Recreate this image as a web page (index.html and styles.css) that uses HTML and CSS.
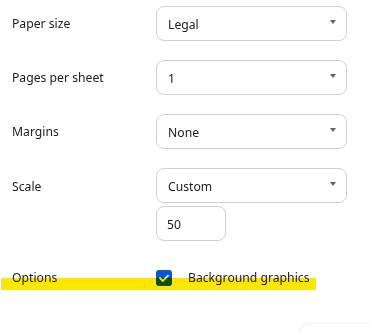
FILE: index.html
```html
<!DOCTYPE html>
<html>
<head>
<meta charset="utf-8">
<link rel="stylesheet" href="styles.css">
</head>
<body>
<div class="settings">
  <div class="row">
    <div class="label">Paper size</div>
    <div class="select"><span>Legal</span><span class="arrow"></span></div>
  </div>
  <div class="row">
    <div class="label">Pages per sheet</div>
    <div class="select"><span>1</span><span class="arrow"></span></div>
  </div>
  <div class="row">
    <div class="label">Margins</div>
    <div class="select"><span>None</span><span class="arrow"></span></div>
  </div>
  <div class="row scale-row">
    <div class="label">Scale</div>
    <div class="controls">
      <div class="select"><span>Custom</span><span class="arrow"></span></div>
      <div class="number">50</div>
    </div>
  </div>
  <div class="row options-row">
    <div class="label">Options</div>
    <div class="check-wrap">
      <span class="checkbox"><svg width="16" height="16" viewBox="0 0 16 16"><path d="M4 8.2 L6.8 11 L12 5.6" fill="none" stroke="#fff" stroke-width="1.8" stroke-linecap="round" stroke-linejoin="round"/></svg></span>
      <span class="check-label">Background graphics</span>
    </div>
    <div class="highlight"></div>
  </div>
</div>
<div class="floating-card"></div>
</body>
</html>
```
FILE: styles.css
```css
html, body {
  margin: 0;
  padding: 0;
  background: #fff;
  width: 370px;
  height: 334px;
  overflow: hidden;
}
body {
  font-family: "Noto Sans", "Open Sans", sans-serif;
  font-size: 12.2px;
  color: #202124;
  position: relative;
}
.settings {
  padding-top: 6px;
  display: flex;
  flex-direction: column;
  gap: 19px;
}
.row {
  display: grid;
  grid-template-columns: 156px 191px;
  align-items: center;
}
.label {
  padding-left: 12px;
  line-height: 16px;
}
.select {
  box-sizing: border-box;
  height: 35px;
  border: 1px solid #d0d0d0;
  border-radius: 8px;
  display: flex;
  align-items: center;
  justify-content: space-between;
  padding: 3px 10px 0 11px;
  line-height: 16px;
}
.arrow {
  width: 0;
  height: 0;
  border-left: 3.5px solid transparent;
  border-right: 3.5px solid transparent;
  border-top: 4px solid #5f6368;
  margin-top: -6px;
}
.scale-row {
  align-items: start;
}
.scale-row .label {
  margin-top: 11px;
}
.controls {
  display: flex;
  flex-direction: column;
  gap: 3px;
}
.number {
  box-sizing: border-box;
  width: 70px;
  height: 35px;
  border: 1px solid #d0d0d0;
  border-radius: 8px;
  padding: 2px 0 0 10px;
  display: flex;
  align-items: center;
}
.options-row {
  position: relative;
  margin-top: 10px;
}
.check-wrap {
  display: flex;
  align-items: center;
  gap: 16px;
}
.checkbox {
  width: 16px;
  height: 16px;
  border-radius: 3px;
  background: #0b57d0;
  display: block;
}
.checkbox svg {
  display: block;
}
.check-label {
  line-height: 16px;
}
.highlight {
  position: absolute;
  left: 1px;
  top: 8px;
  width: 315px;
  height: 12px;
  background: #ffe600;
  mix-blend-mode: multiply;
}
.floating-card {
  position: absolute;
  left: 300px;
  top: 324px;
  width: 70px;
  height: 10px;
  background: #fff;
  border-radius: 10px 0 0 0;
  box-shadow: -1px -1px 3px rgba(0, 0, 0, 0.07);
}
```
